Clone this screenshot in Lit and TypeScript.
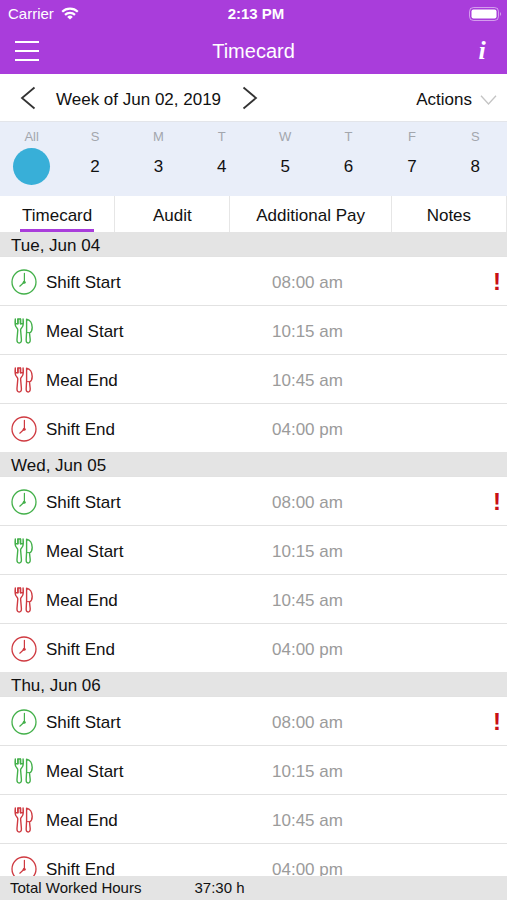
import { LitElement, html, css, svg } from "lit";
import { customElement, property, state } from "lit/decorators.js";
import { classMap } from "lit/directives/class-map.js";

interface Punch {
  label: string;
  time: string;
  kind: "shift" | "meal";
  phase: "start" | "end";
  alert?: boolean;
}

const punches: Punch[] = [
  { label: "Shift Start", time: "08:00 am", kind: "shift", phase: "start", alert: true },
  { label: "Meal Start", time: "10:15 am", kind: "meal", phase: "start" },
  { label: "Meal End", time: "10:45 am", kind: "meal", phase: "end" },
  { label: "Shift End", time: "04:00 pm", kind: "shift", phase: "end" },
];

const sections = ["Tue, Jun 04", "Wed, Jun 05", "Thu, Jun 06"];

const days = [
  { name: "All", num: "" },
  { name: "S", num: "2" },
  { name: "M", num: "3" },
  { name: "T", num: "4" },
  { name: "W", num: "5" },
  { name: "T", num: "6" },
  { name: "F", num: "7" },
  { name: "S", num: "8" },
];

const tabs = ["Timecard", "Audit", "Additional Pay", "Notes"];

const clockShape = svg`
  <circle cx="13" cy="13" r="12" stroke-width="1.3"></circle>
  <path d="M13.400 4.300V13L8.800 17.200" stroke-width="1.200"></path>
  <circle cx="13.200" cy="13.200" r="1.500" fill="currentColor" stroke="none"></circle>`;

const cutleryShape = svg`
  <path d="M4.300 1C4 4 4 7 4.800 8.500C5.500 9.800 6.900 10.200 6.800 12L6 21.500C5.800 24 6.800 25 8.200 25S10.600 24 10.400 21.500L9.600 12C9.500 10.200 10.900 9.800 11.600 8.500C12.400 7 12.400 4 12.100 1V5.800H9.500V1H6.900V5.800H4.300Z"></path>
  <path d="M6.900 1.200V5.800M9.500 1.200V5.800" stroke-width="1.400"></path>
  <path d="M15.600 1.200V13.800L15.200 21.500C15 24 15.800 25 17.100 25S19.400 24 19.200 21.500L18.500 15C20.200 14 21.200 12 21.200 9.400C21.200 5 19 1.600 15.600 1.200Z"></path>
  <path d="M15.600 14.600H18.400" stroke-width="1"></path>`;

@customElement("punch-row")
class PunchRow extends LitElement {
  @property({ attribute: false }) punch!: Punch;

  static styles = css`
    :host {
      display: grid;
      grid-template-columns: 26px 217fr 206fr 20px;
      column-gap: 9px;
      align-items: center;
      box-sizing: border-box;
      height: 49px;
      padding: 2px 0 0 11px;
      border-top: 1px solid #e2e2e2;
      background: #fff;
    }
    .icon {
      width: 26px;
      height: 26px;
      fill: none;
      stroke: currentColor;
      stroke-width: 1.4;
      stroke-linecap: round;
      stroke-linejoin: round;
    }
    .start { color: #43b04a; }
    .end { color: #cf3a41; }
    .text { padding-top: 1px; }
    .time { color: #9b9b9b; }
    .alert {
      color: #c80f14;
      font-size: 24px;
      font-weight: bold;
      text-align: center;
    }
  `;

  render() {
    const p = this.punch;
    return html`
      <svg class="icon ${p.phase}" viewBox="0 0 26 26" aria-hidden="true">
        ${p.kind === "shift" ? clockShape : cutleryShape}
      </svg>
      <span class="text">${p.label}</span>
      <span class="text time">${p.time}</span>
      ${p.alert ? html`<span class="alert">!</span>` : ""}
    `;
  }
}

@customElement("app-root")
class AppRoot extends LitElement {
  @state() private tab = 0;
  @state() private day = 0;

  static styles = css`
    :host {
      display: flex;
      flex-direction: column;
      height: 100vh;
      background: #fff;
      color: #111;
      font: 17px/24px "Liberation Sans", Arial, sans-serif;
    }
    button {
      margin: 0;
      padding: 0;
      border: 0;
      background: none;
      color: inherit;
      font: inherit;
      cursor: pointer;
    }
    svg {
      display: block;
      fill: none;
      stroke: currentColor;
    }
    h1, h2, ul {
      margin: 0;
      padding: 0;
      font: inherit;
      list-style: none;
    }
    .top {
      background: #a93ddb;
      color: #fff;
    }
    .status, .nav {
      display: grid;
      grid-template-columns: 1fr auto 1fr;
      align-items: center;
    }
    .status {
      height: 27px;
      padding: 0 5px 0 8px;
    }
    .carrier {
      display: flex;
      align-items: center;
      gap: 7px;
      font-size: 15px;
    }
    .clock {
      padding-left: 2px;
      font-size: 15px;
      font-weight: bold;
    }
    .end { justify-self: end; }
    .nav {
      height: 47px;
      padding: 0 16px 0 14px;
    }
    .title {
      padding-left: 2px;
      font-size: 20px;
    }
    .menu { justify-self: start; }
    .info {
      width: 18px;
      font: italic bold 26px/28px "Liberation Serif", serif;
    }
    .week {
      display: flex;
      align-items: center;
      height: 48px;
      padding: 0 10px 0 20px;
      border-bottom: 1px solid #e3e5ea;
      box-sizing: border-box;
      flex: none;
    }
    .range {
      padding: 4px 21px 0 20px;
    }
    .actions {
      display: flex;
      align-items: center;
      gap: 8px;
      margin-left: auto;
      padding-top: 4px;
    }
    .chevron { color: #c4c4c4; }
    .arrow { color: #333; }
    .days {
      display: grid;
      grid-template-columns: repeat(8, 1fr);
      height: 74px;
      background: #e9eef9;
      flex: none;
    }
    .day {
      display: flex;
      flex-direction: column;
      align-items: center;
      padding-top: 6px;
    }
    .name {
      color: #a3a6ad;
      font-size: 13px;
      line-height: 18px;
    }
    .num {
      width: 37px;
      margin-top: 2px;
      border-radius: 50%;
      line-height: 37px;
      height: 37px;
    }
    .picked { background: #38afd8; }
    .tabs {
      display: grid;
      grid-template-columns: 5fr 5fr 7fr 5fr;
      height: 36px;
      flex: none;
    }
    .tab {
      display: flex;
      justify-content: center;
      border-right: 1px solid #e6e6e6;
    }
    .caption {
      box-sizing: border-box;
      height: 36px;
      padding: 8px 2px 0;
      border-bottom: 3px solid transparent;
    }
    .current { border-color: #a93ddb; }
    .list {
      flex: 1;
      min-height: 0;
      overflow-y: auto;
      scrollbar-width: none;
    }
    .date {
      height: 24px;
      padding-left: 11px;
      background: #e4e4e4;
      line-height: 28px;
    }
    .total {
      display: flex;
      gap: 53px;
      height: 24px;
      padding-left: 10px;
      background: #e4e4e4;
      font-size: 15px;
      flex: none;
    }
  `;

  render() {
    return html`
      <header class="top">
        <div class="status">
          <div class="carrier">
            <span>Carrier</span>
            <svg width="18" height="13" viewBox="0 0 18 13" stroke-width="2.2" aria-hidden="true">
              <path d="M1.200 4.700a11.200 11.200 0 0 1 15.600 0M4 7.900a7.200 7.200 0 0 1 10 0"></path>
              <path d="M9 12.500L6.200 9.900a4 4 0 0 1 5.600 0z" fill="currentColor" stroke="none"></path>
            </svg>
          </div>
          <span class="clock">2:13 PM</span>
          <svg class="end" width="33" height="14" viewBox="0 0 33 14" aria-hidden="true">
            <rect x="0.500" y="0.500" width="29" height="13" rx="4" stroke-opacity="0.500"></rect>
            <rect x="2.500" y="2.500" width="25" height="9" rx="2" fill="currentColor" stroke="none"></rect>
            <path d="M31 5q2.200 2 0 4z" fill="currentColor" fill-opacity="0.500" stroke="none"></path>
          </svg>
        </div>
        <div class="nav">
          <button class="menu" aria-label="Menu">
            <svg width="26" height="22" viewBox="0 0 26 22" stroke-width="2">
              <path d="M1 2H25M1 11H25M1 20H25"></path>
            </svg>
          </button>
          <h1 class="title">Timecard</h1>
          <button class="info end" aria-label="Information">i</button>
        </div>
      </header>

      <div class="week">
        <button class="arrow" aria-label="Previous week">
          <svg width="16" height="24" viewBox="0 0 16 24" stroke-width="1.800"><path d="M14.500 1.500L2 12L14.500 22.500"></path></svg>
        </button>
        <span class="range">Week of Jun 02, 2019</span>
        <button class="arrow" aria-label="Next week">
          <svg width="16" height="24" viewBox="0 0 16 24" stroke-width="1.800"><path d="M1.500 1.500L14 12L1.500 22.500"></path></svg>
        </button>
        <button class="actions">
          <span>Actions</span>
          <svg class="chevron" width="17" height="10" viewBox="0 0 17 10" stroke-width="1.300"><path d="M1 0.800L8.500 9L16 0.800"></path></svg>
        </button>
      </div>

      <div class="days">
        ${days.map((d, i) => html`
          <button class="day" @click=${() => (this.day = i)}>
            <span class="name">${d.name}</span>
            <span class=${classMap({ num: true, picked: i === this.day })}>${d.num}</span>
          </button>`)}
      </div>

      <nav class="tabs">
        ${tabs.map((t, i) => html`
          <button class="tab" @click=${() => (this.tab = i)}>
            <span class=${classMap({ caption: true, current: i === this.tab })}>${t}</span>
          </button>`)}
      </nav>

      <main class="list">
        ${sections.map((s) => html`
          <section>
            <h2 class="date">${s}</h2>
            <ul>
              ${punches.map((p) => html`<li><punch-row .punch=${p}></punch-row></li>`)}
            </ul>
          </section>`)}
      </main>

      <footer class="total">
        <span>Total Worked Hours</span>
        <span>37:30 h</span>
      </footer>
    `;
  }
}
